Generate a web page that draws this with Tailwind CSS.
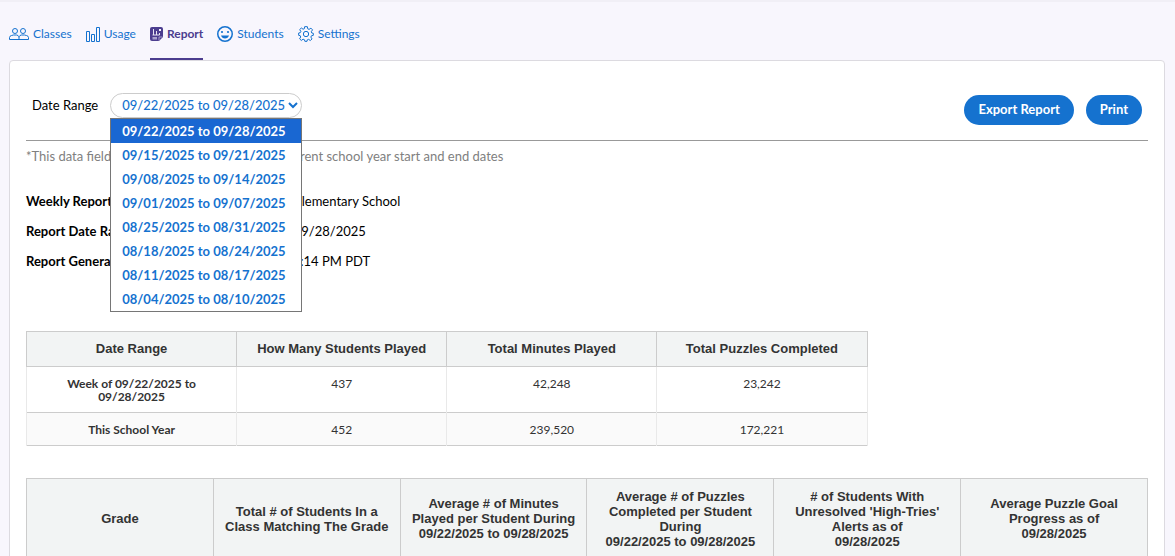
<!DOCTYPE html>
<html lang="en">
<head>
    <meta charset="UTF-8">
    <meta name="viewport" content="width=device-width, initial-scale=1.0">
    <title>Weekly Report</title>
    <script src="https://cdn.jsdelivr.net/npm/@tailwindcss/browser@4"></script>
</head>
<body class="bg-[#f8f6fd] font-['Lato',sans-serif] text-[13px] text-black">
    <!-- Tabs -->
    <nav class="flex items-start gap-[14px] border-t-2 border-[#f1eff6] pl-[9px] pt-[20px] text-xs leading-6 text-[#1572cf]">
        <a href="#classes" class="flex h-[38px] gap-1">
            <svg class="mt-1 h-4 w-5" viewBox="0 0 20 16" fill="none" stroke="currentColor">
                <circle cx="6" cy="5" r="2.500"/>
                <circle cx="14" cy="5" r="2.500"/>
                <path d="M.5 13.500v-2q0-1.500 2-2l2-.5h3l1.500.5q1 .5 1 2v2zM10 11.500q0-1.500 1-2l1.500-.5h3l2 .5q2 .5 2 2v2H10"/>
            </svg>
            Classes
        </a>
        <a href="#usage" class="flex h-[38px] gap-1">
            <svg class="mt-1 h-4 w-[14px]" viewBox="0 0 14 16" fill="none" stroke="currentColor">
                <path d="M.5 5.500h3v10h-3zM5.500 8.500h3v7h-3zM10.500 1.500h3v14h-3z"/>
            </svg>
            Usage
        </a>
        <a href="#report" class="flex h-[38px] gap-1 border-b-2 border-[#4c3d8f] font-bold text-[#4c3d8f]">
            <svg class="mt-1 h-4 w-[13px]" viewBox="0 0 13 16">
                <path d="M2 1h9q2 0 2 2v8l-4 4H2q-2 0-2-2V3q0-2 2-2z" fill="currentColor"/>
                <path d="M3.500 3v6M6.500 5v4M2.500 9h7M9.500 7v2" fill="none" stroke="#e8e4f2"/>
                <path d="M9 3h2v2H9z" fill="#f8f6fd"/>
                <path d="M2.500 11h4.500v2.500H2.500z" fill="#a9a1cc"/>
                <path d="M9 14.500V11h3.500" fill="none" stroke="#a9a1cc"/>
            </svg>
            Report
        </a>
        <a href="#students" class="flex h-[38px] gap-1">
            <svg class="mt-1 size-4" viewBox="0 0 16 16">
                <circle cx="8" cy="8" r="7.250" fill="none" stroke="currentColor" stroke-width="1.500"/>
                <circle cx="5" cy="6" r="1.100" fill="currentColor"/>
                <circle cx="11" cy="6" r="1.100" fill="currentColor"/>
                <path d="M4 9.500h8q-1 3-4 3T4 9.500z" fill="currentColor"/>
            </svg>
            Students
        </a>
        <a href="#settings" class="flex h-[38px] gap-1">
            <svg class="mt-1 size-4" viewBox="0 0 24 24" fill="none" stroke="currentColor" stroke-width="1.500" stroke-linejoin="round">
                <circle cx="12" cy="12" r="4"/>
                <path d="M10 1h4l.6 3.200 2 .9L19.400 3.200l2.400 2.600-1.900 2.800.8 1.900L23 11v3l-2.900.7-.8 1.900 1.700 2.800-2.400 2.400-2.800-1.800-1.900.8L13.500 23h-3.200l-.6-2.400-2.100-.8-2.700 1.900-2.500-2.500 1.700-2.700-.8-2L1 14v-3.500l2.500-.6.8-1.900-1.800-2.600L5 3l2.600 1.800 1.900-.7z"/>
            </svg>
            Settings
        </a>
    </nav>

    <main class="ml-[9px] mr-[10px] rounded border border-[#dcdae0] bg-white px-4 pb-4 pt-8">
        <!-- Toolbar -->
        <div class="flex h-12 items-start justify-between border-b border-[#999]">
            <div class="flex items-center gap-3 pl-[6px]">
                <label for="dateRange" class="text-[13px]">Date Range</label>
                <div class="relative">
                    <select id="dateRange" class="block h-[25px] w-48 appearance-none rounded-full border border-[#ccc] bg-white pl-[11px] text-[13px] font-medium text-[#1572cf]">
                        <option>09/22/2025 to 09/28/2025</option>
                    </select>
                    <svg class="pointer-events-none absolute right-1 top-2 h-2 w-[10px]" viewBox="0 0 10 8" fill="none" stroke="#1572cf" stroke-width="2"><path d="M1 2l4 4 4-4"/></svg>
                    <ul role="listbox" aria-label="Date Range" class="absolute left-0 top-full w-48 border border-[#767676] bg-white text-[13px] font-bold leading-6 text-[#1572cf]">
                        <li role="option" aria-selected="true" class="bg-[#1967d2] pl-[11px] text-white">09/22/2025 to 09/28/2025</li>
                        <li role="option" class="pl-[11px]">09/15/2025 to 09/21/2025</li>
                        <li role="option" class="pl-[11px]">09/08/2025 to 09/14/2025</li>
                        <li role="option" class="pl-[11px]">09/01/2025 to 09/07/2025</li>
                        <li role="option" class="pl-[11px]">08/25/2025 to 08/31/2025</li>
                        <li role="option" class="pl-[11px]">08/18/2025 to 08/24/2025</li>
                        <li role="option" class="pl-[11px]">08/11/2025 to 08/17/2025</li>
                        <li role="option" class="pl-[11px]">08/04/2025 to 08/10/2025</li>
                    </ul>
                </div>
            </div>
            <div class="flex gap-3 pr-[6px] pt-[2px]">
                <button type="button" class="h-[30px] rounded-full bg-[#1572cf] px-[14px] text-[13px] font-bold text-white">Export Report</button>
                <button type="button" class="h-[30px] rounded-full bg-[#1572cf] px-[14px] text-[13px] font-bold text-white">Print</button>
            </div>
        </div>

        <p class="pt-[5px] leading-5 text-[#808080]">*This data field is only available between the current school year start and end dates</p>

        <dl class="mt-5 grid grid-cols-[177px_1fr] leading-[30px]">
            <dt class="font-bold">Weekly Report for School:</dt>
            <dd>Lakeview Ridge Elementary School</dd>
            <dt class="font-bold">Report Date Range:</dt>
            <dd>09/22/2025 to 09/28/2025</dd>
            <dt class="font-bold">Report Generated:</dt>
            <dd>09/29/2025 at 3:14 PM PDT</dd>
        </dl>

        <!-- Totals -->
        <table class="mt-[55px] w-3/4 table-fixed border-collapse text-center text-[#333]">
            <thead class="bg-[#f2f4f4] font-['Liberation_Sans',Arial,sans-serif]">
                <tr class="h-[35px]">
                    <th class="border border-[#ccc] pb-px">Date Range</th>
                    <th class="border border-[#ccc] pb-px">How Many Students Played</th>
                    <th class="border border-[#ccc] pb-px">Total Minutes Played</th>
                    <th class="border border-[#ccc] pb-px">Total Puzzles Completed</th>
                </tr>
            </thead>
            <tbody class="align-top text-xs leading-[13px]">
                <tr class="border-b border-[#ccc]">
                    <th class="border-x border-x-[#e9e9e9] px-8 pb-[9px] pt-[10px]">Week of 09/22/2025 to 09/28/2025</th>
                    <td class="border-x border-x-[#e9e9e9] pb-[9px] pt-[10px]">437</td>
                    <td class="border-x border-x-[#e9e9e9] pb-[9px] pt-[10px]">42,248</td>
                    <td class="border-x border-x-[#e9e9e9] pb-[9px] pt-[10px]">23,242</td>
                </tr>
                <tr class="border-b border-[#ccc] bg-[#fafafa]">
                    <th class="border-x border-x-[#e9e9e9] pb-[9px] pt-[10px]">This School Year</th>
                    <td class="border-x border-x-[#e9e9e9] pb-[9px] pt-[10px]">452</td>
                    <td class="border-x border-x-[#e9e9e9] pb-[9px] pt-[10px]">239,520</td>
                    <td class="border-x border-x-[#e9e9e9] pb-[9px] pt-[10px]">172,221</td>
                </tr>
            </tbody>
        </table>

        <!-- By grade -->
        <table class="mt-8 w-full table-fixed border-collapse text-center text-[#333]">
            <thead class="bg-[#f2f4f4] font-['Liberation_Sans',Arial,sans-serif] leading-[15px]">
                <tr class="h-20">
                    <th class="border border-[#ccc] px-2">Grade</th>
                    <th class="border border-[#ccc] px-2">Total # of Students In a Class Matching The Grade</th>
                    <th class="border border-[#ccc] px-2">Average # of Minutes Played per Student During<br>09/22/2025 to 09/28/2025</th>
                    <th class="border border-[#ccc] px-2">Average # of Puzzles Completed per Student During<br>09/22/2025 to 09/28/2025</th>
                    <th class="border border-[#ccc] px-2"># of Students With Unresolved 'High-Tries' Alerts as of<br>09/28/2025</th>
                    <th class="border border-[#ccc] px-2">Average Puzzle Goal Progress as of<br>09/28/2025</th>
                </tr>
            </thead>
        </table>
    </main>
</body>
</html>
